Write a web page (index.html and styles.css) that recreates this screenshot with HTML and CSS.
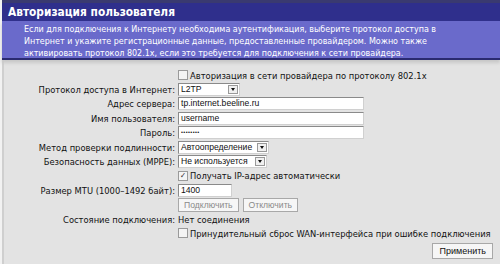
FILE: index.html
```html
<!DOCTYPE html>
<html lang="ru">
<head>
  <meta charset="UTF-8">
  <title>Авторизация пользователя</title>
  <link rel="stylesheet" href="styles.css">
</head>
<body>
  <div class="page">
    <div class="title">Авторизация пользователя</div>
    <div class="intro">
      Если для подключения к Интернету необходима аутентификация, выберите протокол доступа в<br>
      Интернет и укажите регистрационные данные, предоставленные провайдером. Можно также<br>
      активировать протокол 802.1x, если это требуется для подключения к сети провайдера.
    </div>

    <div class="form">
      <div class="row">
        <span class="lbl"></span>
        <label class="chk"><span class="box"></span>Авторизация в сети провайдера по протоколу 802.1x</label>
      </div>
      <div class="row">
        <span class="lbl">Протокол доступа в Интернет:</span>
        <span class="sel w-proto">L2TP<span class="arrow"></span></span>
      </div>
      <div class="row">
        <span class="lbl">Адрес сервера:</span>
        <span class="inp w-long">tp.internet.beeline.ru</span>
      </div>
      <div class="row">
        <span class="lbl">Имя пользователя:</span>
        <span class="inp w-long">username</span>
      </div>
      <div class="row">
        <span class="lbl">Пароль:</span>
        <span class="inp w-long pass">••••••••</span>
      </div>
      <div class="row">
        <span class="lbl">Метод проверки подлинности:</span>
        <span class="sel w-method">Автоопределение<span class="arrow"></span></span>
      </div>
      <div class="row">
        <span class="lbl">Безопасность данных (MPPE):</span>
        <span class="sel w-mppe">Не используется<span class="arrow"></span></span>
      </div>
      <div class="row">
        <span class="lbl"></span>
        <label class="chk"><span class="box on">&#10003;</span>Получать IP-адрес автоматически</label>
      </div>
      <div class="row">
        <span class="lbl">Размер MTU (1000–1492 байт):</span>
        <span class="inp w-mtu">1400</span>
      </div>
      <div class="row">
        <span class="lbl"></span>
        <span class="btns">
          <span class="btn off">Подключить</span>
          <span class="btn off">Отключить</span>
        </span>
      </div>
      <div class="row">
        <span class="lbl">Состояние подключения:</span>
        <span class="val">Нет соединения</span>
      </div>
      <div class="row">
        <span class="lbl"></span>
        <label class="chk"><span class="box"></span>Принудительный сброс WAN-интерфейса при ошибке подключения</label>
      </div>
      <div class="apply-row">
        <span class="btn apply">Применить</span>
      </div>
    </div>
  </div>
</body>
</html>
```

FILE: styles.css
```css
* { margin: 0; padding: 0; box-sizing: border-box; }
body { background: #e3e3e3; font-family: "DejaVu Sans Condensed", "DejaVu Sans", Verdana, sans-serif; color: #111; overflow: hidden; }
.page { width: 500px; height: 264px; border-left: 2px solid #f2f2f2; box-shadow: inset 5px 0 0 -3px #cfcfcf; }

.title { background: #2f2f8c; color: #fff; font-weight: bold; font-size: 11.8px; height: 21px; line-height: 18px; padding-left: 6px; border-top: 3px solid #3a3a70; }
.intro { background: #6a6acb; color: #fff; font-size: 8.9px; line-height: 12px; padding: 2px 10px 3px 22px; height: 39px; white-space: nowrap; border-bottom: 2px solid #2a2a70; box-shadow: 0 3px 3px #c8c8c8; }

.form { padding-top: 8px; font-size: 9.3px; }
.row { display: flex; align-items: center; height: 14.4px; }
.lbl { width: 176px; text-align: right; padding-right: 3px; flex-shrink: 0; }

.chk { display: flex; align-items: center; gap: 2px; }
.box { width: 10px; height: 10px; border: 1px solid #9a9a9a; background: #f4f4f4; font-size: 8px; line-height: 8px; text-align: center; color: #222; }

.inp, .sel { height: 13px; background: #fff; border: 1px solid #8a8a8a; border-right-color: #d0d0d0; border-bottom-color: #d0d0d0; font-family: "Liberation Sans", Arial, sans-serif; font-size: 8.6px; line-height: 11px; padding-left: 2px; position: relative; white-space: nowrap; overflow: hidden; }
.w-long { width: 186px; }
.w-mtu { width: 54px; }
.w-proto { width: 62px; }
.w-method { width: 91px; }
.w-mppe { width: 89px; }
.pass { font-size: 5.5px; letter-spacing: 0.4px; }
.arrow { position: absolute; right: 1px; top: 1px; width: 10px; height: 9px; background: #f0f0f0; border: 1px solid #999; }
.arrow::after { content: ""; position: absolute; left: 2px; top: 2px; border-left: 2.5px solid transparent; border-right: 2.5px solid transparent; border-top: 3px solid #111; }

.btns { display: flex; gap: 4px; }
.btn { height: 14px; border: 1px solid #a8a8a8; background: #f6f6f6; font-family: "Liberation Sans", Arial, sans-serif; font-size: 8.6px; line-height: 12px; padding: 0 5px; }
.btn.off { color: #8a8a8a; }

.apply-row { display: flex; justify-content: flex-end; padding: 2px 7px 0 0; }
.apply { height: 16px; line-height: 14px; padding: 0 6px; color: #111; font-size: 9px; }
```
